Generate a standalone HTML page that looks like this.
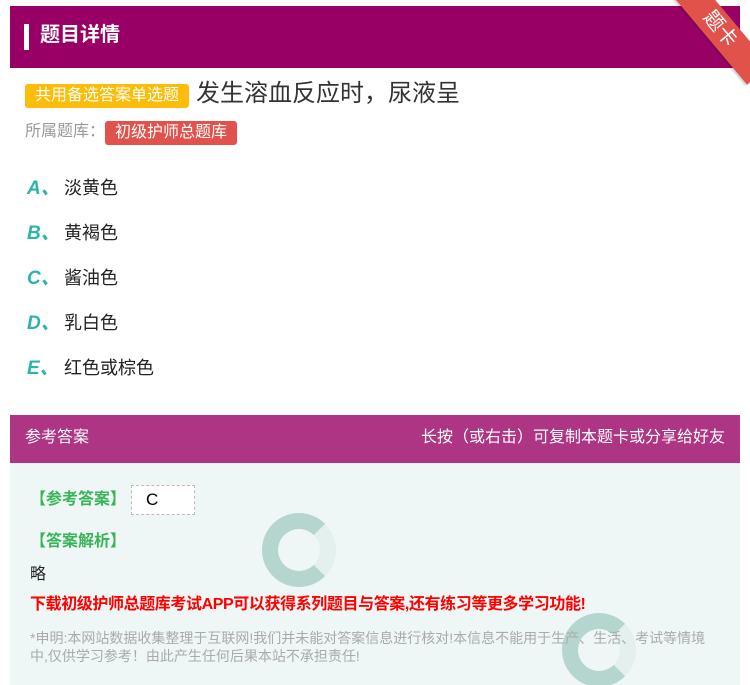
<!DOCTYPE html>
<html><head><meta charset="utf-8"><style>
*{margin:0;padding:0;box-sizing:border-box}
body{width:750px;height:685px;background:#fff;font-family:"Liberation Sans","Noto Sans CJK SC",sans-serif;position:relative;overflow:hidden}
.hd{position:absolute;left:10px;top:6px;width:730px;height:62px;background:#990066}
.hd .bar{position:absolute;left:14px;top:18px;width:5px;height:26px;background:#fff}
.hd .t{position:absolute;left:30px;top:15px;color:#fff;font-size:20px;font-weight:bold;line-height:28px}
.rib{position:absolute;right:-30px;top:14px;width:120px;height:30px;background:#e0524a;transform:rotate(50deg);color:#fff;font-size:20px;text-align:center;line-height:30px;box-shadow:0 2px 2px rgba(0,0,0,.2)}
.tag{position:absolute;color:#fff;font-size:16px;border-radius:3px;line-height:24px;padding:0 9px}
.q{position:absolute;left:196px;top:77px;font-size:24px;color:#333;line-height:34px}
.lib{position:absolute;left:25px;top:121px;color:#999;font-size:16px;line-height:22px}
.opt{position:absolute;left:27px;font-size:18px;color:#222;line-height:24px}
.opt b{color:#2bb5a9;font-style:italic;font-size:19px;display:inline-block;width:37px}
.ah{position:absolute;left:10px;top:415px;width:730px;height:48px;background:#ad3584;color:#fff;font-size:16px;line-height:46px;padding:0 15px}
.ah span{float:right}
.ab{position:absolute;left:10px;top:463px;width:730px;height:222px;background:#eef7f5;overflow:hidden}
.g{position:absolute;left:20px;color:#3bb35a;font-size:16px;font-weight:bold}
.ring{position:absolute;width:74px;height:74px;border-radius:50%;border:16px solid #b5d6cf;border-right-color:#e4f0ed}
</style></head><body>
<div class="hd"><div class="bar"></div><div class="t">题目详情</div></div>
<div class="rib">题卡</div>
<div class="tag" style="left:25px;top:84px;background:#fbbd0a;width:164px;padding:0;text-align:center">共用备选答案单选题</div>
<div class="q">发生溶血反应时，尿液呈</div>
<div class="lib">所属题库：</div>
<div class="tag" style="left:105px;top:121px;background:#e0524a;width:132px;padding:0;text-align:center">初级护师总题库</div>
<div class="opt" style="top:176px"><b>A、</b>淡黄色</div>
<div class="opt" style="top:221px"><b>B、</b>黄褐色</div>
<div class="opt" style="top:266px"><b>C、</b>酱油色</div>
<div class="opt" style="top:311px"><b>D、</b>乳白色</div>
<div class="opt" style="top:356px"><b>E、</b>红色或棕色</div>
<div class="ah">参考答案<span>长按（或右击）可复制本题卡或分享给好友</span></div>
<div class="ab">
<div class="ring" style="left:252px;top:50px"></div>
<div class="ring" style="left:552px;top:150px"></div>
<div class="g" style="top:22px">【参考答案】</div>
<div style="position:absolute;left:121px;top:22px;width:64px;height:30px;background:#fff;border:1px dashed #bbb;font-size:17px;padding-left:14px;line-height:28px">C</div>
<div class="g" style="top:64px">【答案解析】</div>
<div style="position:absolute;left:20px;top:97px;font-size:16px;color:#222">略</div>
<div style="position:absolute;left:20px;top:127px;font-size:16px;color:#f00;font-weight:bold;letter-spacing:-0.4px">下载初级护师总题库考试APP可以获得系列题目与答案,还有练习等更多学习功能!</div>
<div style="position:absolute;left:20px;top:166px;width:685px;font-size:14px;color:#aaa;line-height:18px">*申明:本网站数据收集整理于互联网!我们并未能对答案信息进行核对!本信息不能用于生产、生活、考试等情境中,仅供学习参考！由此产生任何后果本站不承担责任!</div>
</div>
</body></html>
